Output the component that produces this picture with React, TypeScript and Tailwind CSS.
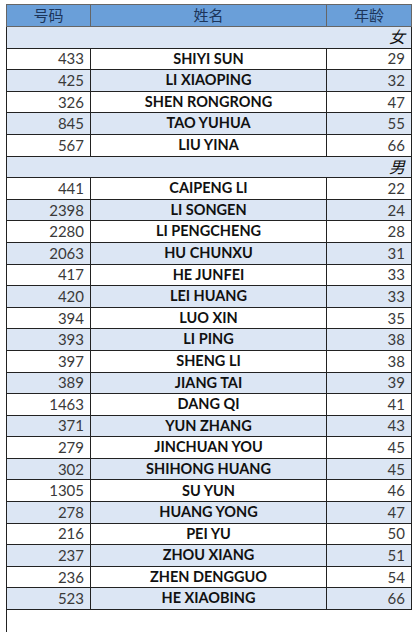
import React from 'react';

type Person = { id: number; name: string; age: number };

const women: Person[] = [
  { id: 433, name: 'SHIYI SUN', age: 29 },
  { id: 425, name: 'LI XIAOPING', age: 32 },
  { id: 326, name: 'SHEN RONGRONG', age: 47 },
  { id: 845, name: 'TAO YUHUA', age: 55 },
  { id: 567, name: 'LIU YINA', age: 66 },
];

const men: Person[] = [
  { id: 441, name: 'CAIPENG LI', age: 22 },
  { id: 2398, name: 'LI SONGEN', age: 24 },
  { id: 2280, name: 'LI PENGCHENG', age: 28 },
  { id: 2063, name: 'HU CHUNXU', age: 31 },
  { id: 417, name: 'HE JUNFEI', age: 33 },
  { id: 420, name: 'LEI HUANG', age: 33 },
  { id: 394, name: 'LUO XIN', age: 35 },
  { id: 393, name: 'LI PING', age: 38 },
  { id: 397, name: 'SHENG LI', age: 38 },
  { id: 389, name: 'JIANG TAI', age: 39 },
  { id: 1463, name: 'DANG QI', age: 41 },
  { id: 371, name: 'YUN ZHANG', age: 43 },
  { id: 279, name: 'JINCHUAN YOU', age: 45 },
  { id: 302, name: 'SHIHONG HUANG', age: 45 },
  { id: 1305, name: 'SU YUN', age: 46 },
  { id: 278, name: 'HUANG YONG', age: 47 },
  { id: 216, name: 'PEI YU', age: 50 },
  { id: 237, name: 'ZHOU XIANG', age: 51 },
  { id: 236, name: 'ZHEN DENGGUO', age: 54 },
  { id: 523, name: 'HE XIAOBING', age: 66 },
];

function GroupRow({ label }: { label: string }) {
  return (
    <tr className="h-[21.6px] bg-[#dce6f4]">
      <td colSpan={3} className="border border-[#222] pr-[6px] text-right italic text-[16px] leading-none text-[#111]">
        {label}
      </td>
    </tr>
  );
}

function PersonRow({ p, shaded }: { p: Person; shaded: boolean }) {
  return (
    <tr className={`h-[21.6px] ${shaded ? 'bg-[#dce6f4]' : 'bg-white'}`}>
      <td className="border border-[#222] pr-[6px] text-right text-[15px] leading-none text-[#3a3a3a]">{p.id}</td>
      <td className="border border-[#222] text-center text-[14.5px] font-bold leading-none text-[#111]">{p.name}</td>
      <td className="border border-[#222] pr-[6px] text-right text-[15px] leading-none text-[#3a3a3a]">{p.age}</td>
    </tr>
  );
}

export default function App() {
  return (
    <div className="w-[416px] h-[632px] overflow-hidden bg-white pt-[4px] pl-[6px]" style={{ fontFamily: 'Lato, "Noto Sans CJK SC", sans-serif' }}>
      <table className="border-collapse table-fixed w-[405px]">
        <colgroup>
          <col className="w-[84px]" />
          <col className="w-[236px]" />
          <col className="w-[85px]" />
        </colgroup>
        <thead>
          <tr className="h-[22px] bg-[#6a9fd9] text-[#1c355a] text-[15px]">
            <th className="border border-[#666] font-normal leading-none">号码</th>
            <th className="border border-[#666] font-normal leading-none">姓名</th>
            <th className="border border-[#666] font-normal leading-none">年龄</th>
          </tr>
        </thead>
        <tbody>
          <GroupRow label="女" />
          {women.map((p, i) => (
            <PersonRow key={p.id} p={p} shaded={i % 2 === 1} />
          ))}
          <GroupRow label="男" />
          {men.map((p, i) => (
            <PersonRow key={p.id} p={p} shaded={i % 2 === 1} />
          ))}
          <tr className="h-[26px]">
            <td className="border-l border-[#222]" />
            <td />
            <td />
          </tr>
        </tbody>
      </table>
    </div>
  );
}
